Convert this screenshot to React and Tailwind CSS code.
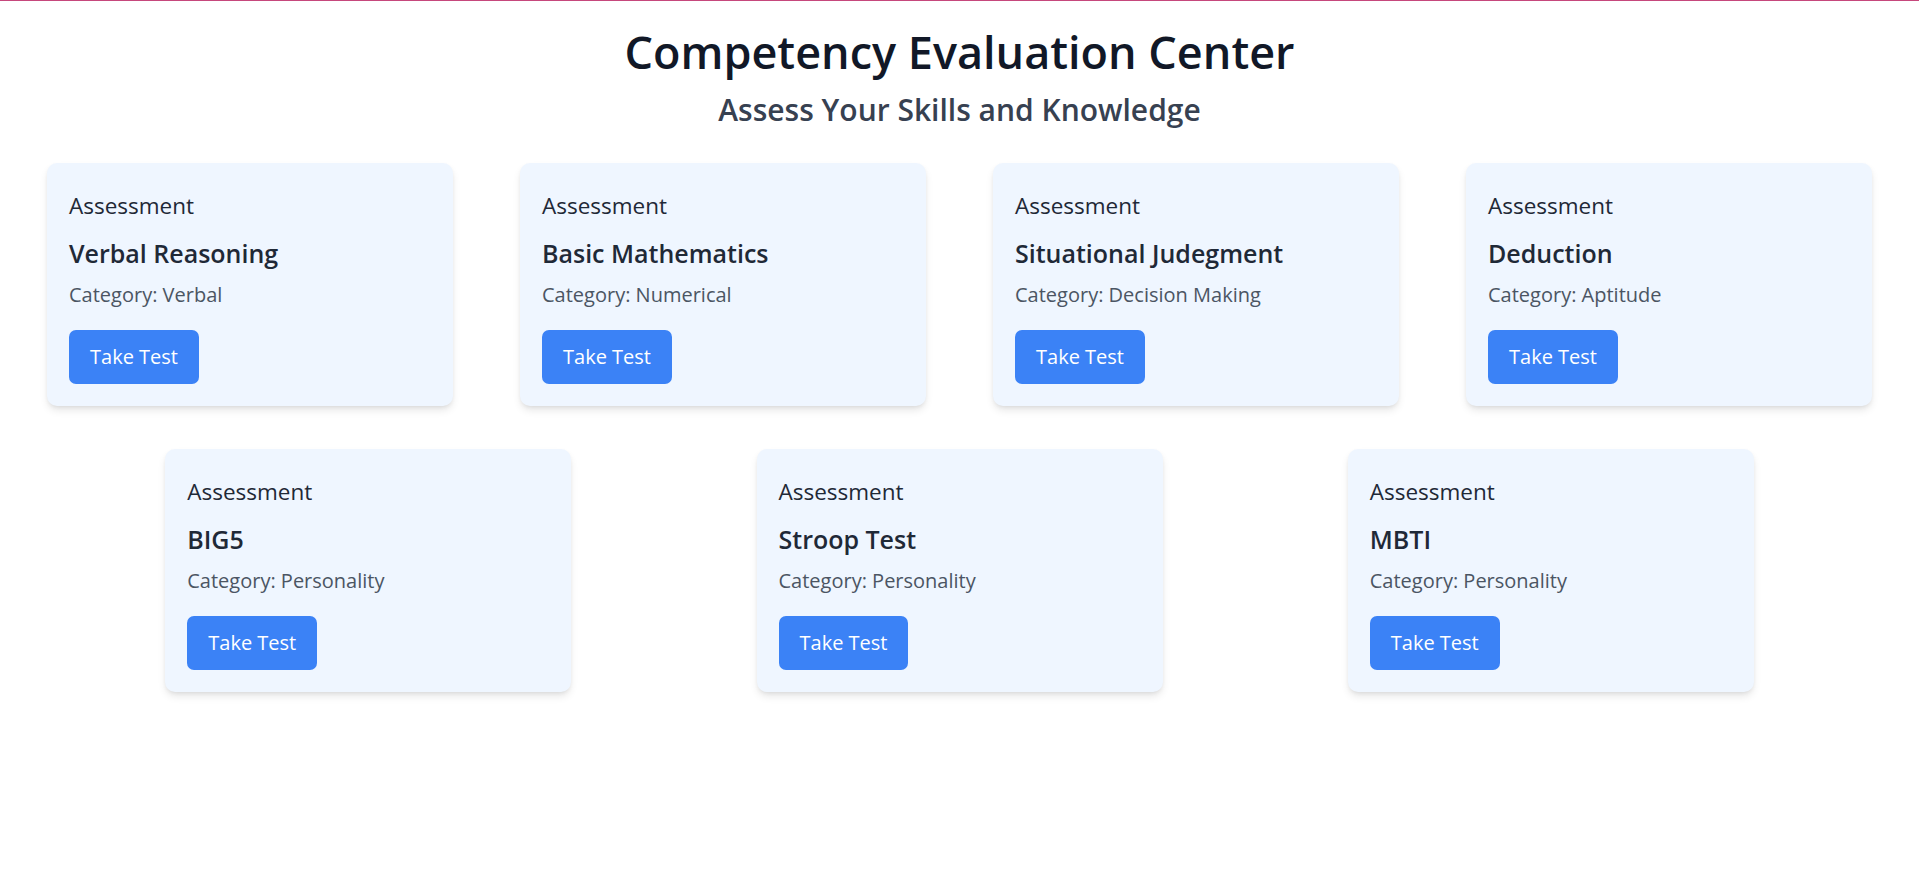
import React from 'react';

const tests = [
    { name: 'Verbal Reasoning', category: 'Verbal' },
    { name: 'Basic Mathematics', category: 'Numerical' },
    { name: 'Situational Judegment', category: 'Decision Making' },
    { name: 'Deduction', category: 'Aptitude' },
    { name: 'BIG5', category: 'Personality' },
    { name: 'Stroop Test', category: 'Personality' },
    { name: 'MBTI', category: 'Personality' },
];

function TestCard({ name, category }) {
    return (
        <div className="w-[406px] mx-5 my-[21.5px] px-[22px] pt-[25px] pb-[22px] flex flex-col items-start rounded-[10px] bg-[#eff6ff] shadow-[0_5px_8px_-1px_rgba(0,0,0,0.1),0_2px_5px_-2px_rgba(0,0,0,0.1)]">
            <p className="text-[22.5px] leading-[35px] text-[#1f2937]">Assessment</p>
            <h3 className="mt-[13px] text-[25px] leading-[35px] font-semibold text-[#1f2937]">{name}</h3>
            <p className="mt-[9px] text-[20px] leading-[30px] text-[#4b5563]">Category: {category}</p>
            <button className="mt-5 px-[21px] py-[10px] rounded-[7px] bg-[#3b82f6] text-white text-[20px] leading-[34px]">
                Take Test
            </button>
        </div>
    );
}

export default function App() {
    return (
        <div className="min-h-screen bg-white font-['Open_Sans',sans-serif]">
            <div className="h-px bg-[#c6487c]"></div>
            <header className="text-center pt-[26px]">
                <h1 className="text-[45px] leading-[50px] font-semibold text-[#111827]">Competency Evaluation Center</h1>
                <h2 className="mt-[13px] text-[30px] leading-[40px] font-semibold text-[#374151]">Assess Your Skills and Knowledge</h2>
            </header>
            <main className="mt-[11px] flex flex-wrap justify-evenly">
                {tests.map((t) => (
                    <TestCard key={t.name} name={t.name} category={t.category} />
                ))}
            </main>
        </div>
    );
}
